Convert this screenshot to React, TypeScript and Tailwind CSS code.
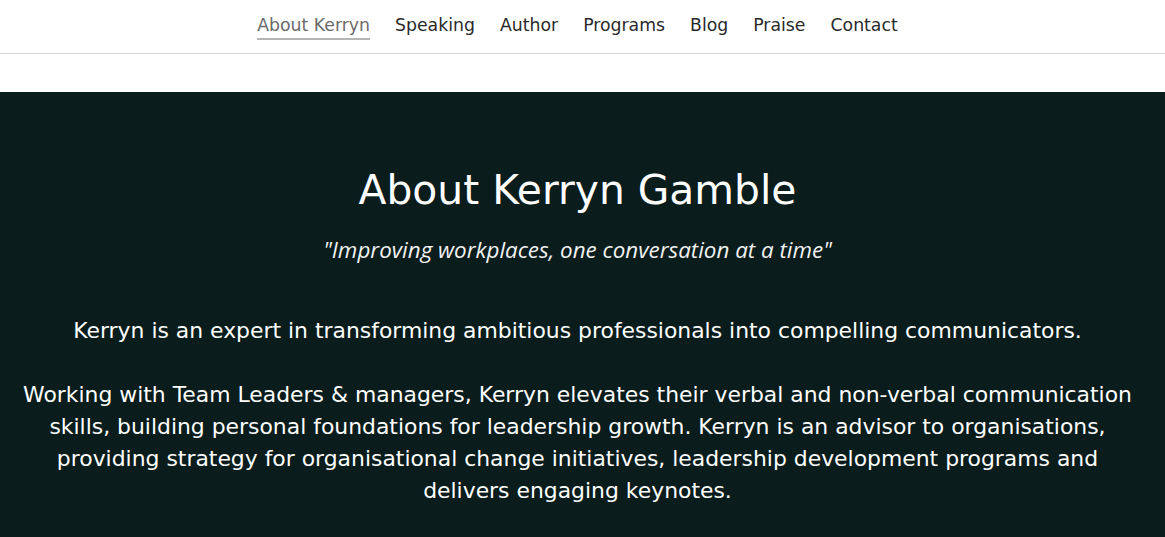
const navItems = ["About Kerryn", "Speaking", "Author", "Programs", "Blog", "Praise", "Contact"];

export default function App() {
  return (
    <div className="min-h-[537px] bg-white font-['DejaVu_Sans',sans-serif]">
      <nav className="h-[54px] border-b border-[#d4d4d4] flex justify-center items-start pt-[13px] pr-[10px] gap-[25px]">
        {navItems.map((item, i) => (
          <a
            key={item}
            href="#"
            className={
              i === 0
                ? "text-[17.3px] leading-[24px] text-[#6b6b6b] border-b-2 border-[#b5b5b5] pb-[1px]"
                : "text-[17.3px] leading-[24px] text-[#2a2a2a]"
            }
          >
            {item}
          </a>
        ))}
      </nav>
      <div className="h-[38px]" />
      <section className="bg-[#0a1c1c] text-white text-center pt-[72px] pb-[40px] pl-[10px] pr-[20px]">
        <h1 className="text-[40.8px] leading-[52px] font-normal">About Kerryn Gamble</h1>
        <p className="mt-[19px] font-['Open_Sans',sans-serif] italic text-[22.4px] leading-[30px] text-[#f2f2f2]">
          "Improving workplaces, one conversation at a time"
        </p>
        <p className="mt-[50px] text-[21.9px] leading-[32px]">
          Kerryn is an expert in transforming ambitious professionals into compelling communicators.
        </p>
        <p className="mt-[32px] text-[21.9px] leading-[32px]">
          Working with Team Leaders &amp; managers, Kerryn elevates their verbal and non-verbal communication
          <br />
          skills, building personal foundations for leadership growth. Kerryn is an advisor to organisations,
          <br />
          providing strategy for organisational change initiatives, leadership development programs and
          <br />
          delivers engaging keynotes.
        </p>
      </section>
    </div>
  );
}
